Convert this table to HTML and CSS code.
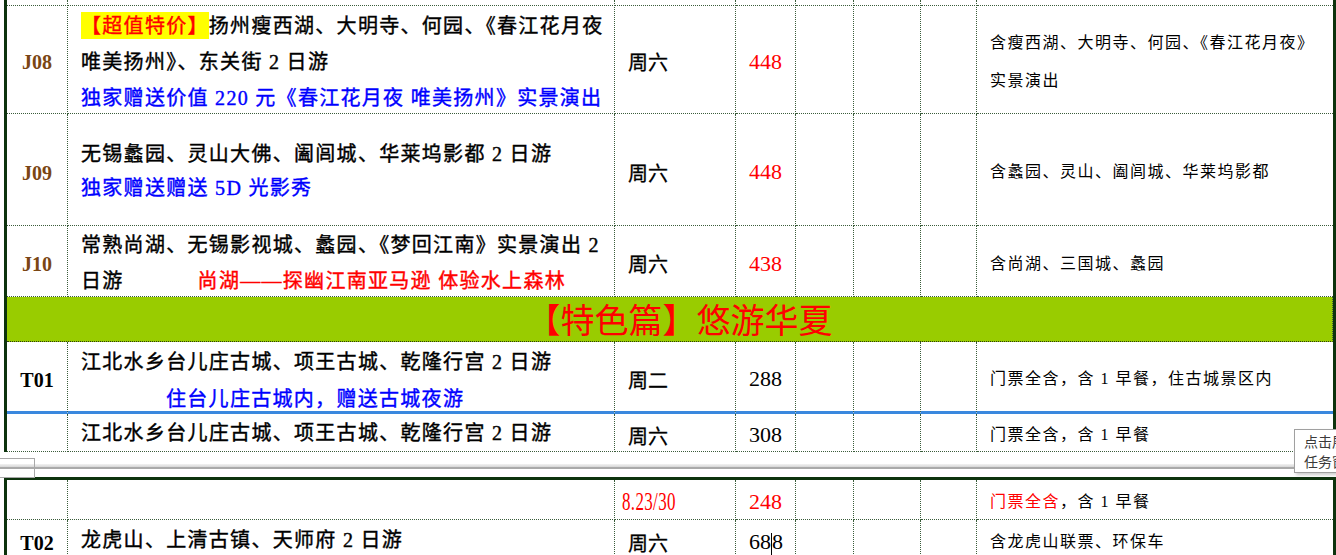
FILE: index.html
```html
<!DOCTYPE html>
<html lang="zh-CN">
<head>
<meta charset="utf-8">
<title>线路表</title>
<link rel="stylesheet" href="styles.css">
</head>
<body>
<div class="sheet top">
  <div class="grid">
    <div class="c"></div><div class="c"></div><div class="c"></div><div class="c"></div><div class="c"></div><div class="c"></div><div class="c"></div><div class="c last"></div>

    <div class="c code brown">J08</div>
    <div class="c name j08">
      <div><span class="hl">【超值特价】</span>扬州瘦西湖、大明寺、何园、《春江花月夜</div>
      <div>唯美扬州》、东关街 2 日游</div>
      <div class="blue">独家赠送价值 220 元《春江花月夜 唯美扬州》实景演出</div>
    </div>
    <div class="c day">周六</div>
    <div class="c price red">448</div>
    <div class="c"></div><div class="c"></div><div class="c"></div>
    <div class="c note last"><div>含瘦西湖、大明寺、何园、《春江花月夜》</div><div>实景演出</div></div>

    <div class="c code brown">J09</div>
    <div class="c name j09">
      <div>无锡蠡园、灵山大佛、阖闾城、华莱坞影都 2 日游</div>
      <div class="blue">独家赠送赠送 5D 光影秀</div>
    </div>
    <div class="c day">周六</div>
    <div class="c price red">448</div>
    <div class="c"></div><div class="c"></div><div class="c"></div>
    <div class="c note last"><div>含蠡园、灵山、阖闾城、华莱坞影都</div></div>

    <div class="c code brown">J10</div>
    <div class="c name j10">
      <div>常熟尚湖、无锡影视城、蠡园、《梦回江南》实景演出 2</div>
      <div>日游<span class="red slogan">尚湖——探幽江南亚马逊 体验水上森林</span></div>
    </div>
    <div class="c day">周六</div>
    <div class="c price red">438</div>
    <div class="c"></div><div class="c"></div><div class="c"></div>
    <div class="c note last"><div>含尚湖、三国城、蠡园</div></div>

    <div class="c band">【特色篇】悠游华夏</div>

    <div class="c code sel">T01</div>
    <div class="c name t01 sel">
      <div>江北水乡台儿庄古城、项王古城、乾隆行宫 2 日游</div>
      <div class="blue indent">住台儿庄古城内，赠送古城夜游</div>
    </div>
    <div class="c day sel">周二</div>
    <div class="c price sel">288</div>
    <div class="c sel"></div><div class="c sel"></div><div class="c sel"></div>
    <div class="c note last sel"><div>门票全含，含 1 早餐，住古城景区内</div></div>

    <div class="c code"></div>
    <div class="c name short">
      <div>江北水乡台儿庄古城、项王古城、乾隆行宫 2 日游</div>
    </div>
    <div class="c day">周六</div>
    <div class="c price">308</div>
    <div class="c"></div><div class="c"></div><div class="c"></div>
    <div class="c note last"><div>门票全含，含 1 早餐</div></div>
  </div>
</div>

<div class="split">
  <div class="split-box"></div>
</div>

<div class="sheet bottom">
  <div class="grid">
    <div class="c code"></div>
    <div class="c name"></div>
    <div class="c date red"><span class="date-text">8.23/30</span></div>
    <div class="c price red">248</div>
    <div class="c"></div><div class="c"></div><div class="c"></div>
    <div class="c note last"><div><span class="red">门票全含</span>，含 1 早餐</div></div>

    <div class="c code">T02</div>
    <div class="c name short">
      <div>龙虎山、上清古镇、天师府 2 日游</div>
    </div>
    <div class="c day">周六</div>
    <div class="c price">68<span class="caret"></span>8</div>
    <div class="c"></div><div class="c"></div><div class="c"></div>
    <div class="c note last"><div>含龙虎山联票、环保车</div></div>
  </div>
</div>

<div class="tip">
  <div>点击展</div>
  <div>任务窗</div>
</div>
</body>
</html>
```

FILE: styles.css
```css
* {
  box-sizing: border-box;
  margin: 0;
  padding: 0;
}

html, body {
  width: 1336px;
  height: 555px;
  overflow: hidden;
  background: #fff;
}

body {
  position: relative;
  font-family: "Liberation Serif", "Noto Sans CJK SC", serif;
  color: #000;
}

.sheet {
  margin-left: 4px;
  width: 1332px;
  border-left: 3px solid #0d330d;
  border-right: 3px solid #0d330d;
}

.grid {
  display: grid;
  grid-template-columns: 61px 547px 121px 60px 58px 67px 56px 356px;
}

.top .grid {
  grid-template-rows: 5px 109px 112px 71px 45px 72px 38px;
}

.bottom {
  border-top: 3px solid #0d330d;
}

.bottom .grid {
  grid-template-rows: 40px 40px;
}

.c {
  border-right: 1px dotted #3a5c3a;
  border-bottom: 1px dotted #3a5c3a;
  overflow: hidden;
  display: flex;
  flex-direction: column;
  justify-content: center;
  padding-top: 5px;
  white-space: nowrap;
}

.c.last {
  border-right: none;
}

.red { color: #ff0000; }
.blue { color: #0000ff; }

.code {
  align-items: center;
  font-weight: bold;
  font-size: 20px;
  padding-top: 7px;
}

.code.brown { color: #7a4614; }

.name {
  padding-left: 13px;
  font-size: 20px;
  letter-spacing: 1.3px;
  -webkit-text-stroke: 0.4px currentColor;
  justify-content: flex-start;
  line-height: 36px;
}

.j08 { padding-top: 3px; }
.j09 { padding-top: 23px; line-height: 34px; }
.j10 { padding-top: 1px; }
.t01 { padding-top: 2px; line-height: 37px; }
.short { padding-top: 1px; justify-content: center; }

.hl {
  background: #ffff00;
  color: #ff0000;
  padding: 3px 0 2px;
}

.slogan { margin-left: 74px; }
.indent { padding-left: 85px; }

.day {
  padding-left: 13px;
  font-size: 20px;
  -webkit-text-stroke: 0.3px currentColor;
}

.price {
  flex-direction: row;
  justify-content: flex-start;
  align-items: center;
  padding-left: 13px;
  font-size: 22px;
}

.date {
  padding-left: 7px;
  font-size: 25px;
}

.date-text {
  display: inline-block;
  transform: scaleX(0.68);
  transform-origin: left center;
  letter-spacing: 0.5px;
}

.caret {
  display: inline-block;
  width: 1px;
  height: 26px;
  background: #000;
  margin-top: 8px;
}

.note {
  padding-left: 13px;
  font-size: 16px;
  letter-spacing: 1.5px;
  line-height: 38px;
}

.band {
  grid-column: 1 / -1;
  background: #99cc00;
  color: #ff0000;
  font-family: "Noto Sans CJK SC", sans-serif;
  font-size: 34px;
  line-height: 44px;
  align-items: center;
  padding-top: 0;
  padding-left: 20px;
  overflow: visible;
  border-bottom-color: #2a3a10;
}

.sel {
  border-bottom: 3px solid #3a88de;
}

.split {
  position: relative;
  height: 25px;
  background: linear-gradient(to bottom, #fff 0, #fff 12px, #f2f2f2 12px, #d6d6d6 15px, #a9a9a9 15px, #a9a9a9 17px, #fff 17px);
}

.split-box {
  position: absolute;
  left: 0;
  top: 6px;
  width: 35px;
  height: 20px;
  border: 1px solid #a8a8a8;
  border-left: none;
}

.tip {
  position: absolute;
  left: 1294px;
  top: 429px;
  width: 42px;
  height: 44px;
  background: #fff;
  border: 1px solid #a0a0a0;
  border-right: none;
  box-shadow: 2px 2px 3px rgba(0, 0, 0, 0.2);
  font-family: "Noto Sans CJK SC", sans-serif;
  font-size: 14px;
  line-height: 20px;
  color: #3a3a3a;
  padding: 1px 0 0 9px;
  white-space: nowrap;
  overflow: hidden;
}
```
